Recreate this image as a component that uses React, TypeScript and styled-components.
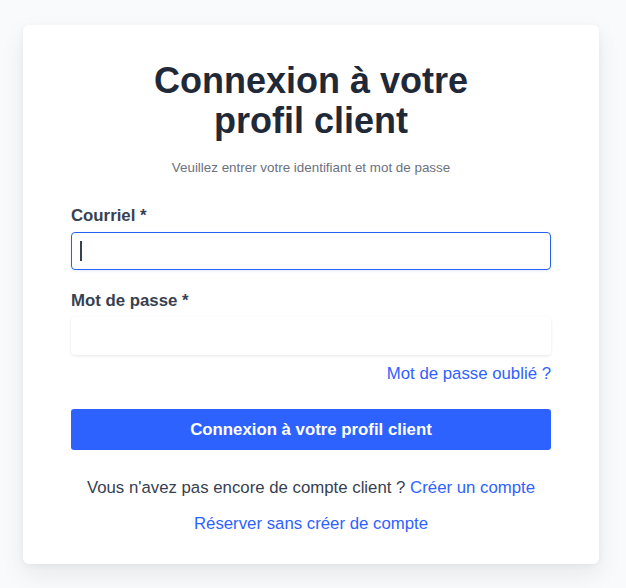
import styled, { createGlobalStyle } from "styled-components";

const GlobalStyle = createGlobalStyle`
  html, body {
    margin: 0;
    padding: 0;
    background: #f9fafb;
    font-family: "Liberation Sans", Arial, sans-serif;
  }
  * { box-sizing: border-box; }
`;

// Fond de page
const Page = styled.div`
  min-height: 588px;
  padding: 25px 27px 23px 23px;
`;

const Card = styled.div`
  width: 576px;
  background: #ffffff;
  border-radius: 6px;
  box-shadow: 0 10px 24px rgba(17, 24, 39, 0.08), 0 2px 6px rgba(17, 24, 39, 0.04);
  padding: 36px 48px 28px;
  display: flex;
  flex-direction: column;
`;

const Title = styled.h1`
  margin: 0;
  font-size: 36px;
  line-height: 40px;
  font-weight: 700;
  color: #1f2937;
  text-align: center;
  padding: 0 70px;
`;

const Subtitle = styled.p`
  margin: 17px 0 0;
  font-size: 13.4px;
  line-height: 20px;
  color: #6b7280;
  text-align: center;
`;

const Form = styled.form`
  display: flex;
  flex-direction: column;
  margin-top: 26px;
`;

const Field = styled.div<{ $gap?: number }>`
  display: flex;
  flex-direction: column;
  gap: 4px;
  margin-top: ${(p) => p.$gap ?? 0}px;
`;

const Label = styled.label`
  font-size: 16.8px;
  line-height: 24px;
  font-weight: 700;
  color: #374151;
`;

// Le curseur du champ actif est dessiné par-dessus le champ
const InputWrap = styled.div<{ $caret?: boolean }>`
  position: relative;

  &::after {
    content: "";
    display: ${(p) => (p.$caret ? "block" : "none")};
    position: absolute;
    left: 9px;
    top: 9px;
    width: 2px;
    height: 20px;
    background: #374151;
    pointer-events: none;
  }
`;

const Input = styled.input`
  display: block;
  height: 38px;
  width: 100%;
  padding: 0 9px;
  font-size: 16.8px;
  font-family: inherit;
  color: #374151;
  caret-color: transparent;
  background: #fff;
  border: 1px solid transparent;
  border-radius: 4px;
  box-shadow: 0 1px 3px rgba(0, 0, 0, 0.1);
  outline: none;

  &:focus {
    border-color: #2563eb;
    box-shadow: 0 1px 3px rgba(37, 99, 235, 0.12);
  }
`;

const Forgot = styled.a`
  align-self: flex-end;
  margin-top: 7px;
  font-size: 16.8px;
  line-height: 24px;
  color: #2f62ff;
  text-decoration: none;
`;

const SubmitButton = styled.button`
  margin-top: 23px;
  height: 41px;
  width: 100%;
  border: none;
  border-radius: 3px;
  background: #2e62ff;
  color: #ffffff;
  font-family: inherit;
  font-size: 16.8px;
  font-weight: 700;
  cursor: pointer;
`;

const Footer = styled.div`
  display: flex;
  flex-direction: column;
  align-items: center;
  gap: 12px;
  margin-top: 26px;
`;

const FooterLine = styled.p`
  margin: 0;
  font-size: 16.8px;
  line-height: 24px;
  color: #374151;
  text-align: center;
`;

const Link = styled.a`
  color: #2f62ff;
  text-decoration: none;
`;

export default function App() {
  return (
    <>
      <GlobalStyle />
      <Page>
        <Card>
          <Title>Connexion à votre profil client</Title>
          <Subtitle>Veuillez entrer votre identifiant et mot de passe</Subtitle>

          <Form onSubmit={(e) => e.preventDefault()}>
            <Field>
              <Label htmlFor="email">Courriel *</Label>
              <InputWrap $caret>
                <Input id="email" type="email" autoFocus />
              </InputWrap>
            </Field>
            <Field $gap={19}>
              <Label htmlFor="password">Mot de passe *</Label>
              <InputWrap>
                <Input id="password" type="password" />
              </InputWrap>
            </Field>
            <Forgot href="#">Mot de passe oublié ?</Forgot>
            <SubmitButton type="submit">Connexion à votre profil client</SubmitButton>
          </Form>

          <Footer>
            <FooterLine>
              Vous n'avez pas encore de compte client ? <Link href="#">Créer un compte</Link>
            </FooterLine>
            <FooterLine>
              <Link href="#">Réserver sans créer de compte</Link>
            </FooterLine>
          </Footer>
        </Card>
      </Page>
    </>
  );
}
